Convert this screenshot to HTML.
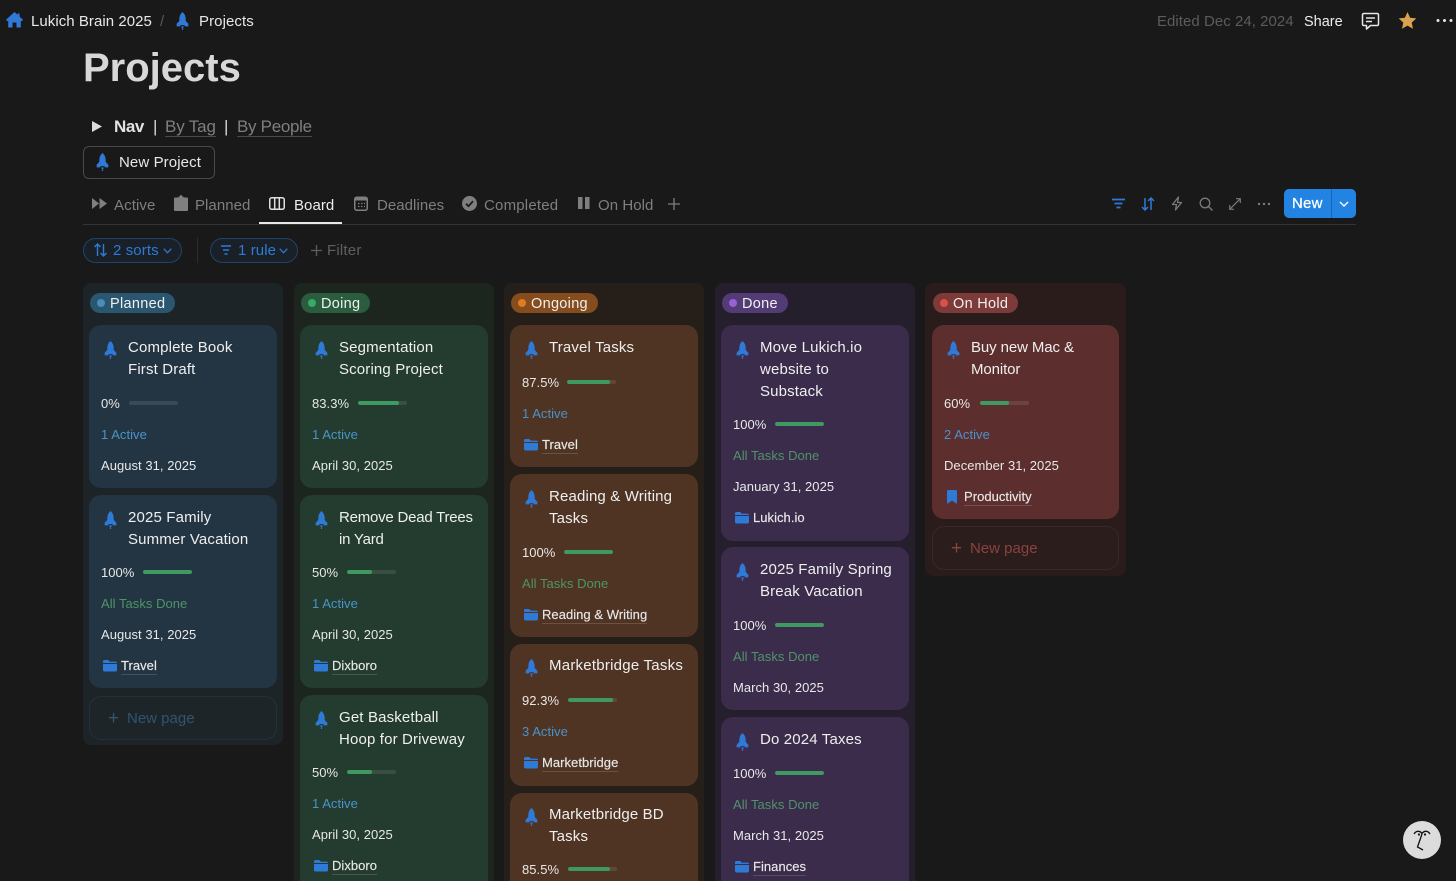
<!DOCTYPE html>
<html><head><meta charset="utf-8"><title>Projects</title>
<style>
*{box-sizing:border-box}
html,body{margin:0;padding:0;width:1456px;height:881px;overflow:hidden;background:#191919}
body{font-family:"Liberation Sans",sans-serif;color:#e6e6e6;position:relative}
.a{position:absolute;white-space:nowrap;line-height:20px}
svg{position:absolute;display:block}
.tab{font-size:15px;letter-spacing:.1px;color:#7f7f7f;top:196px}
.col{position:absolute;top:283px;width:200px;border-radius:8px;overflow:hidden}
.pill{position:absolute;left:7px;top:10px;height:20px;border-radius:10px;font-size:14.5px;letter-spacing:.3px;line-height:22px;color:#f0f0f0;padding-left:20px;padding-right:10px}
.pill i{position:absolute;left:7px;top:6px;width:8px;height:8px;border-radius:50%}
.card{position:absolute;left:6px;width:188px;border-radius:12px;padding:12px 12px 7px 12px}
.t{font-size:15px;letter-spacing:.15px;line-height:22px;padding-left:27px;color:#efefef;position:relative;white-space:nowrap}
.t svg{left:3px;top:4px}
.r{height:31px;line-height:31px;font-size:13px;letter-spacing:.04px;position:relative;color:#e8e8e8;white-space:nowrap}
.first{margin-top:7px}
.bar{position:absolute;top:13px;width:49px;height:4px;border-radius:2px;background:rgba(255,255,255,.1);overflow:hidden}
.bar b{display:block;height:4px;background:#3f9a62;border-radius:2px}
.blue{color:#4a93c9}.green{color:#4f9468}
.tag{padding-left:20px;-webkit-text-stroke:.15px #e8e8e8}
.tag span{border-bottom:1px solid rgba(255,255,255,.15);padding-bottom:1px}
.tag svg{left:2px;top:9px}
.np{position:absolute;left:6px;width:188px;height:44px;border-radius:12px;border:1px solid;font-size:15px;letter-spacing:0;line-height:44px;padding-left:37px}
.np em{position:absolute;left:18px;top:0;font-style:normal;font-size:19px;font-weight:400}
</style></head><body>
<svg width="0" height="0" style="position:absolute"><defs>
<symbol id="rk" viewBox="0 0 14 20"><path fill="#2f7ad6" d="M7 0C9 1.600 10.300 4 10.500 7L10.600 10L13.500 13V16H9.800L9 14.600H5L4.200 16H.5V13L3.400 10L3.500 7C3.700 4 5 1.600 7 0ZM5.700 16H8.300L7.900 18H6.100ZM6.300 18.500H7.700V20H6.300Z"/></symbol>
<symbol id="fd" viewBox="0 0 14 13"><path fill="#2f7ad6" d="M1.500 1H5.200L6.800 2.600H12.500C13.300 2.600 14 3.200 14 4H0V2.500C0 1.600.6 1 1.500 1ZM0 5H14V11C14 11.800 13.400 12.500 12.500 12.500H1.500C.7 12.500 0 11.800 0 11Z"/></symbol>
<symbol id="bk" viewBox="0 0 10 14"><path fill="#2f7ad6" d="M1.200 0H8.800C9.500 0 10 .5 10 1.200V14L5 10.600L0 14V1.200C0 .5.5 0 1.200 0Z"/></symbol>
</defs></svg>

<!-- breadcrumb -->
<svg style="left:6px;top:12px" width="17" height="16" viewBox="0 0 17 16"><path fill="#2f7ad6" d="M8.500 0L11.600 2.800V1.500H13.600V4.600L17 7.700L16 9H14.800V15.500H10.500V10.500H6.500V15.500H2.200V9H1L0 7.700Z"/></svg>
<div class="a" style="left:31px;top:12px;font-size:15px;letter-spacing:.05px;color:#e8e8e8">Lukich Brain 2025</div>
<div class="a" style="left:160px;top:12px;font-size:15px;color:#5a5a5a">/</div>
<svg style="left:176px;top:12px" width="13" height="18"><use href="#rk"/></svg>
<div class="a" style="left:199px;top:12px;font-size:15px;letter-spacing:.08px;color:#e8e8e8">Projects</div>

<div class="a" style="left:1157px;top:12px;font-size:15px;letter-spacing:.04px;color:#5c5c5c">Edited Dec 24, 2024</div>
<div class="a" style="left:1304px;top:12px;font-size:14.500px;letter-spacing:0;color:#ececec">Share</div>
<svg style="left:1361px;top:12px" width="19" height="19" viewBox="0 0 19 19"><path fill="none" stroke="#e6e6e6" stroke-width="1.500" stroke-linejoin="round" d="M3 1.500H16C17 1.500 17.500 2 17.500 3V12C17.500 13 17 13.500 16 13.500H9.500L5.500 17V13.500H3C2 13.500 1.500 13 1.500 12V3C1.500 2 2 1.500 3 1.500Z"/><path stroke="#e6e6e6" stroke-width="1.500" d="M5 6H14M5 9.500H11"/></svg>
<svg style="left:1398px;top:11px" width="19" height="19" viewBox="0 0 19 19"><path fill="#d9a24e" d="M9.500 1L12.100 6.700L18.300 7.400L13.700 11.600L15 17.800L9.500 14.600L4 17.800L5.300 11.600L.7 7.400L6.900 6.700Z"/></svg>
<svg style="left:1436px;top:18px" width="18" height="5"><circle cx="2" cy="2.500" r="1.500" fill="#e6e6e6"/><circle cx="8.500" cy="2.500" r="1.500" fill="#e6e6e6"/><circle cx="15" cy="2.500" r="1.500" fill="#e6e6e6"/></svg>

<div class="a" style="left:83px;top:44px;font-size:40px;font-weight:700;line-height:48px;color:#d8d8d8">Projects</div>

<!-- nav -->
<svg style="left:92px;top:121px" width="10" height="11"><path fill="#dcdcdc" d="M0 0L10 5.500L0 11Z"/></svg>
<div class="a" style="left:114px;top:117px;font-size:17px;font-weight:700;letter-spacing:-.4px;color:#e2e2e2">Nav</div>
<div class="a" style="left:153px;top:117px;font-size:17px;color:#d8d8d8">|</div>
<div class="a" style="left:165px;top:117px;font-size:17px;letter-spacing:-.15px;color:#7f7f7f;border-bottom:1px solid #4a4a4a;line-height:19px">By Tag</div>
<div class="a" style="left:224px;top:117px;font-size:17px;color:#d8d8d8">|</div>
<div class="a" style="left:237px;top:117px;font-size:17px;letter-spacing:-.3px;color:#7f7f7f;border-bottom:1px solid #4a4a4a;line-height:19px">By People</div>

<div class="a" style="left:83px;top:146px;width:132px;height:33px;border:1px solid #4a4a4a;border-radius:6px"></div>
<svg style="left:96px;top:153px" width="13" height="18"><use href="#rk"/></svg>
<div class="a" style="left:119px;top:153px;font-size:15px;letter-spacing:.1px;color:#e8e8e8">New Project</div>

<!-- tabs -->
<svg style="left:92px;top:198px" width="15" height="11"><path fill="#7f7f7f" d="M0 0L7 5.500L0 11ZM7.500 0L15 5.500L7.500 11Z"/></svg>
<div class="a tab" style="left:114px">Active</div>
<svg style="left:174px;top:195px" width="14" height="16" viewBox="0 0 14 16"><path fill="#7f7f7f" d="M1 2.500H4.500V1.500H5.800C5.900.6 6.300 0 7 0S8.100.6 8.200 1.500H9.500V2.500H13C13.600 2.500 14 2.900 14 3.500V15C14 15.600 13.600 16 13 16H1C.4 16 0 15.600 0 15V3.500C0 2.900.4 2.500 1 2.500Z"/></svg>
<div class="a tab" style="left:195px;letter-spacing:.05px">Planned</div>
<svg style="left:269px;top:197px" width="16" height="13" viewBox="0 0 16 13"><rect x=".75" y=".75" width="14.500" height="11.500" rx="2" fill="none" stroke="#e0e0e0" stroke-width="1.500"/><path stroke="#e0e0e0" stroke-width="1.500" d="M5.700 1V12M10.300 1V12"/></svg>
<div class="a tab" style="left:294px;color:#ececec;letter-spacing:.05px">Board</div>
<div class="a" style="left:259px;top:222px;width:83px;height:2px;background:#e8e8e8"></div>
<svg style="left:354px;top:196px" width="14" height="15" viewBox="0 0 14 15"><rect x=".75" y="1.250" width="12.500" height="13" rx="2" fill="none" stroke="#7f7f7f" stroke-width="1.500"/><rect x="1" y="1.500" width="12" height="3" fill="#7f7f7f"/><path stroke="#7f7f7f" stroke-width="1.200" stroke-dasharray="1.500 1.500" d="M4 7.500H11M4 10.500H11"/></svg>
<div class="a tab" style="left:377px;letter-spacing:.05px">Deadlines</div>
<svg style="left:462px;top:196px" width="15" height="15" viewBox="0 0 15 15"><circle cx="7.500" cy="7.500" r="7.500" fill="#7f7f7f"/><path fill="none" stroke="#191919" stroke-width="1.800" d="M4 7.700L6.500 10.200L11 5.200"/></svg>
<div class="a tab" style="left:484px;letter-spacing:.2px">Completed</div>
<svg style="left:578px;top:197px" width="12" height="12"><rect width="4.500" height="12" fill="#7f7f7f"/><rect x="7" width="4.500" height="12" fill="#7f7f7f"/></svg>
<div class="a tab" style="left:598px;letter-spacing:.05px">On Hold</div>
<svg style="left:668px;top:198px" width="12" height="12"><path stroke="#7f7f7f" stroke-width="1.300" d="M6 0V12M0 6H12"/></svg>

<!-- toolbar right -->
<svg style="left:1112px;top:198px" width="14" height="12"><path stroke="#2f7ad6" stroke-width="1.700" d="M0 1.500H13M2.500 5.500H10.500M4.500 9.500H8.500"/></svg>
<svg style="left:1141px;top:197px" width="14" height="14" viewBox="0 0 14 14"><path fill="none" stroke="#2f7ad6" stroke-width="1.500" d="M4 1V13M1 10L4 13L7 10M10 13V1M7 4L10 1L13 4"/></svg>
<svg style="left:1171px;top:196px" width="12" height="15" viewBox="0 0 12 15"><path fill="none" stroke="#7a7a7a" stroke-width="1.300" stroke-linejoin="round" d="M7.500 1L1.500 8.500H5.500L4.500 14L10.500 6.500H6.500Z"/></svg>
<svg style="left:1199px;top:197px" width="14" height="14" viewBox="0 0 14 14"><circle cx="6" cy="6" r="4.800" fill="none" stroke="#7a7a7a" stroke-width="1.300"/><path stroke="#7a7a7a" stroke-width="1.300" d="M9.500 9.500L13.500 13.500"/></svg>
<svg style="left:1229px;top:198px" width="12" height="12" viewBox="0 0 12 12"><path fill="none" stroke="#7a7a7a" stroke-width="1.200" d="M7 .7H11.300V5M11.300 .7L.7 11.300M.7 7V11.300H5"/></svg>
<svg style="left:1257px;top:202px" width="14" height="4"><circle cx="2" cy="2" r="1.200" fill="#7a7a7a"/><circle cx="7" cy="2" r="1.200" fill="#7a7a7a"/><circle cx="12" cy="2" r="1.200" fill="#7a7a7a"/></svg>
<div class="a" style="left:1284px;top:189px;width:72px;height:29px;background:#2383e2;border-radius:5px"></div>
<div class="a" style="left:1331px;top:189px;width:1px;height:29px;background:#1a66b5"></div>
<div class="a" style="left:1292px;top:194px;font-size:15px;font-weight:400;letter-spacing:.2px;color:#fff;-webkit-text-stroke:.25px #fff">New</div>
<svg style="left:1339px;top:201px" width="10" height="7"><path fill="none" stroke="#fff" stroke-width="1.400" d="M1 1L5 5L9 1"/></svg>
<div class="a" style="left:83px;top:224px;width:1273px;height:1px;background:#333"></div>

<!-- filters -->
<div class="a" style="left:83px;top:238px;width:99px;height:25px;border-radius:13px;border:1px solid #1f4468;background:#1a2028"></div>
<svg style="left:93px;top:243px" width="15" height="14" viewBox="0 0 14 14"><path fill="none" stroke="#2f7ad6" stroke-width="1.400" d="M4 13V1M1 4L4 1L7 4M10 1V13M7 10L10 13L13 10"/></svg>
<div class="a" style="left:113px;top:241px;font-size:15px;letter-spacing:.1px;color:#2f7ad6">2 sorts</div>
<svg style="left:163px;top:248px" width="9" height="6"><path fill="none" stroke="#2f7ad6" stroke-width="1.200" d="M.7 .7L4.500 4.700L8.300 .7"/></svg>
<div class="a" style="left:197px;top:237px;width:1px;height:26px;background:#2c2c2c"></div>
<div class="a" style="left:210px;top:238px;width:88px;height:25px;border-radius:13px;border:1px solid #1f4468;background:#1a2028"></div>
<svg style="left:221px;top:245px" width="11" height="11"><path stroke="#2f7ad6" stroke-width="1.400" d="M0 1H10M2 5H8M3.500 9H6.500"/></svg>
<div class="a" style="left:238px;top:241px;font-size:15px;letter-spacing:.1px;color:#2f7ad6">1 rule</div>
<svg style="left:279px;top:248px" width="9" height="6"><path fill="none" stroke="#2f7ad6" stroke-width="1.200" d="M.7 .7L4.500 4.700L8.300 .7"/></svg>
<svg style="left:311px;top:245px" width="11" height="11"><path stroke="#5f5f5f" stroke-width="1.300" d="M5.500 0V11M0 5.500H11"/></svg>
<div class="a" style="left:327px;top:241px;font-size:15px;letter-spacing:.2px;color:#5f5f5f">Filter</div>

<!-- Planned -->
<div class="col" style="left:83px;height:462px;background:#1d2428">
<div class="pill" style="background:#2b5670"><i style="background:#4a8db8"></i>Planned</div>
<div class="card" style="top:42px;height:163px;background:#233542">
<div class="t"><svg width="13" height="18"><use href="#rk"/></svg>Complete Book<br>First Draft</div>
<div class="r first">0%<div class="bar" style="left:28px"><b style="width:0"></b></div></div>
<div class="r blue">1 Active</div><div class="r">August 31, 2025</div></div>
<div class="card" style="top:212px;height:193px;background:#233542">
<div class="t"><svg width="13" height="18"><use href="#rk"/></svg>2025 Family<br>Summer Vacation</div>
<div class="r first" style="margin-top:6px">100%<div class="bar" style="left:42px"><b style="width:100%"></b></div></div>
<div class="r green">All Tasks Done</div><div class="r">August 31, 2025</div>
<div class="r tag"><svg width="14" height="13"><use href="#fd"/></svg><span>Travel</span></div></div>
<div class="np" style="top:413px;border-color:#263038;color:#30556f;background:#1d2529"><em>+</em>New page</div>
</div>

<!-- Doing -->
<div class="col" style="left:294px;height:620px;background:#1c261f">
<div class="pill" style="background:#2a5c3e"><i style="background:#3aa866"></i>Doing</div>
<div class="card" style="top:42px;height:163px;background:#233c2f">
<div class="t"><svg width="13" height="18"><use href="#rk"/></svg>Segmentation<br>Scoring Project</div>
<div class="r first">83.3%<div class="bar" style="left:46px"><b style="width:83.3%"></b></div></div>
<div class="r blue">1 Active</div><div class="r">April 30, 2025</div></div>
<div class="card" style="top:212px;height:193px;background:#233c2f">
<div class="t" style="letter-spacing:-.22px"><svg width="13" height="18"><use href="#rk"/></svg>Remove Dead Trees<br>in Yard</div>
<div class="r first" style="margin-top:6px">50%<div class="bar" style="left:35px"><b style="width:50%"></b></div></div>
<div class="r blue">1 Active</div><div class="r">April 30, 2025</div>
<div class="r tag"><svg width="14" height="13"><use href="#fd"/></svg><span>Dixboro</span></div></div>
<div class="card" style="top:412px;height:200px;background:#233c2f">
<div class="t"><svg width="13" height="18"><use href="#rk"/></svg>Get Basketball<br>Hoop for Driveway</div>
<div class="r first" style="margin-top:6px">50%<div class="bar" style="left:35px"><b style="width:50%"></b></div></div>
<div class="r blue">1 Active</div><div class="r">April 30, 2025</div>
<div class="r tag"><svg width="14" height="13"><use href="#fd"/></svg><span>Dixboro</span></div></div>
</div>

<!-- Ongoing -->
<div class="col" style="left:504px;height:620px;background:#261e18">
<div class="pill" style="background:#854c1d"><i style="background:#e07c20"></i>Ongoing</div>
<div class="card" style="top:42px;height:142px;background:#4f3423">
<div class="t"><svg width="13" height="18"><use href="#rk"/></svg>Travel Tasks</div>
<div class="r first" style="margin-top:8px">87.5%<div class="bar" style="left:45px"><b style="width:87.5%"></b></div></div>
<div class="r blue">1 Active</div>
<div class="r tag"><svg width="14" height="13"><use href="#fd"/></svg><span>Travel</span></div></div>
<div class="card" style="top:191px;height:163px;background:#4f3423">
<div class="t"><svg width="13" height="18"><use href="#rk"/></svg>Reading &amp; Writing<br>Tasks</div>
<div class="r first">100%<div class="bar" style="left:42px"><b style="width:100%"></b></div></div>
<div class="r green">All Tasks Done</div>
<div class="r tag"><svg width="14" height="13"><use href="#fd"/></svg><span>Reading &amp; Writing</span></div></div>
<div class="card" style="top:361px;height:142px;background:#4f3423;padding-top:11px">
<div class="t" style="letter-spacing:.24px"><svg width="13" height="18"><use href="#rk"/></svg>Marketbridge Tasks</div>
<div class="r first" style="margin-top:8px">92.3%<div class="bar" style="left:46px"><b style="width:92.3%"></b></div></div>
<div class="r blue">3 Active</div>
<div class="r tag"><svg width="14" height="13"><use href="#fd"/></svg><span>Marketbridge</span></div></div>
<div class="card" style="top:510px;height:170px;background:#4f3423;padding-top:11px">
<div class="t"><svg width="13" height="18"><use href="#rk"/></svg>Marketbridge BD<br>Tasks</div>
<div class="r first" style="margin-top:6px">85.5%<div class="bar" style="left:46px"><b style="width:85.5%"></b></div></div>
</div>
</div>

<!-- Done -->
<div class="col" style="left:715px;height:620px;background:#251e2c">
<div class="pill" style="background:#533b76"><i style="background:#9a60d8"></i>Done</div>
<div class="card" style="top:42px;height:216px;background:#3b2c4c">
<div class="t"><svg width="13" height="18"><use href="#rk"/></svg>Move Lukich.io<br>website to<br>Substack</div>
<div class="r first" style="margin-top:6px">100%<div class="bar" style="left:42px"><b style="width:100%"></b></div></div>
<div class="r green">All Tasks Done</div><div class="r">January 31, 2025</div>
<div class="r tag"><svg width="14" height="13"><use href="#fd"/></svg><span style="border:0">Lukich.io</span></div></div>
<div class="card" style="top:264px;height:163px;background:#3b2c4c">
<div class="t"><svg width="13" height="18"><use href="#rk"/></svg>2025 Family Spring<br>Break Vacation</div>
<div class="r first">100%<div class="bar" style="left:42px"><b style="width:100%"></b></div></div>
<div class="r green">All Tasks Done</div><div class="r">March 30, 2025</div></div>
<div class="card" style="top:434px;height:190px;background:#3b2c4c">
<div class="t"><svg width="13" height="18"><use href="#rk"/></svg>Do 2024 Taxes</div>
<div class="r first">100%<div class="bar" style="left:42px"><b style="width:100%"></b></div></div>
<div class="r green">All Tasks Done</div><div class="r">March 31, 2025</div>
<div class="r tag"><svg width="14" height="13"><use href="#fd"/></svg><span>Finances</span></div></div>
</div>

<!-- On Hold -->
<div class="col" style="left:925px;width:201px;height:293px;background:#2a1c1b">
<div class="pill" style="left:8px;background:#7c3a38"><i style="background:#dc4f4a"></i>On Hold</div>
<div class="card" style="left:7px;width:187px;top:42px;height:194px;background:#5c2e2e">
<div class="t" style="letter-spacing:-.1px"><svg width="13" height="18"><use href="#rk"/></svg>Buy new Mac &amp;<br>Monitor</div>
<div class="r first">60%<div class="bar" style="left:36px"><b style="width:60%"></b></div></div>
<div class="r blue">2 Active</div><div class="r">December 31, 2025</div>
<div class="r tag"><svg style="left:3px;top:9px" width="10" height="14"><use href="#bk"/></svg><span>Productivity</span></div></div>
<div class="np" style="left:7px;width:187px;top:243px;border-color:#3d2726;color:#8a4240;background:#2b1d1c"><em>+</em>New page</div>
</div>

<!-- help -->
<div class="a" style="left:1403px;top:821px;width:38px;height:38px;border-radius:50%;background:#dcdcdc"></div>
<svg style="left:1403px;top:821px" width="38" height="38" viewBox="0 0 38 38"><path fill="none" stroke="#111" stroke-width="1.300" d="M11 13C13 9.500 17 9.500 19 12.500C21 9.500 25 9.500 27 13M19 13L14.500 26L20 29"/><circle cx="16" cy="13.500" r="1.100" fill="#111"/><circle cx="22" cy="13.500" r="1.100" fill="#111"/></svg>
</body></html>
